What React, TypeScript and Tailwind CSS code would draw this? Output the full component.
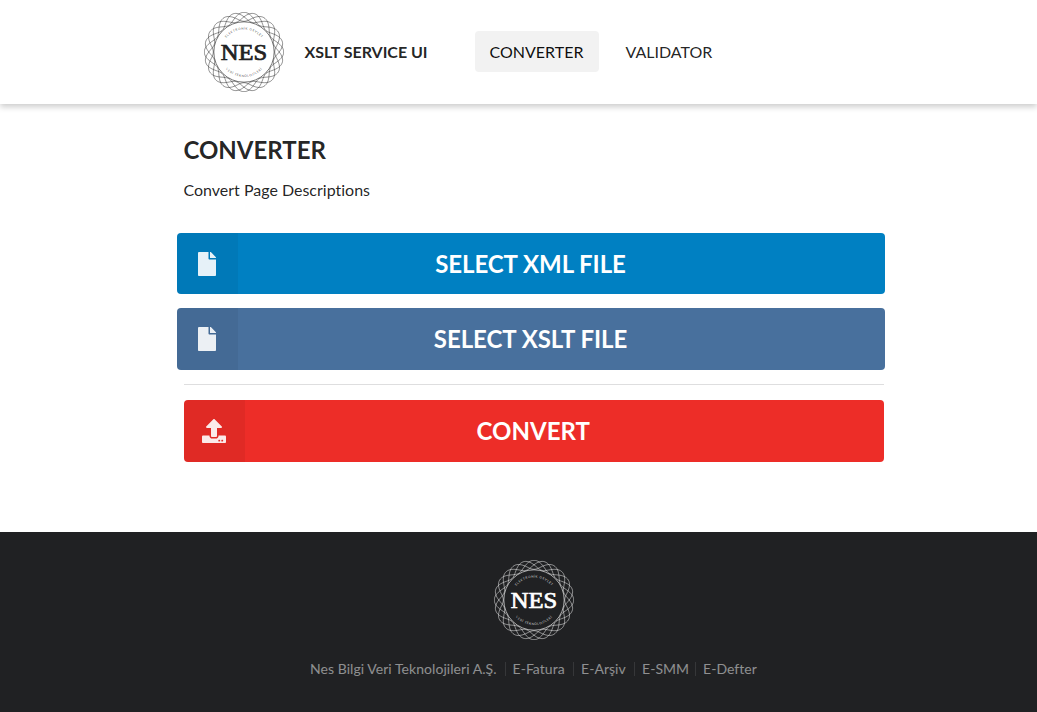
import { FaFile, FaUpload } from "react-icons/fa";

function wave(phase: number) {
  const points = Array.from({ length: 181 }, (_, i) => {
    const a = (i * 2 * Math.PI) / 180;
    const r = 35.2 + 4.5 * Math.cos(6 * a + phase);
    return `${(r * Math.cos(a)).toFixed(2)} ${(r * Math.sin(a)).toFixed(2)}`;
  });
  return `M${points.join("L")}Z`;
}

const waves = [0, 1, 2, 3].map((i) => wave((i * Math.PI) / 2));

function Logo({ id, ink }: { id: string; ink: string }) {
  return (
    <svg width="80" height="80" viewBox="-40 -40 80 80" className="block shrink-0" fill="none">
      <g stroke={ink} strokeWidth="0.55" strokeOpacity="0.9">
        {waves.map((d) => (
          <path key={d} d={d} />
        ))}
      </g>
      <circle r="30.2" stroke={ink} strokeWidth="0.7" strokeOpacity="0.9" />
      <path id={`${id}-top`} d="M-22.5 0A22.5 22.5 0 0 1 22.5 0" />
      <path id={`${id}-bottom`} d="M-25 0A25 25 0 0 0 25 0" />
      <g fill={ink} fillOpacity="0.8" fontSize="3.2" textAnchor="middle" fontFamily="Lato, sans-serif">
        <text letterSpacing="0.5">
          <textPath href={`#${id}-top`} startOffset="50%">ELEKTRONİK DEVLET</textPath>
        </text>
        <text letterSpacing="0.55">
          <textPath href={`#${id}-bottom`} startOffset="50%">VERİ TEKNOLOJİLERİ</textPath>
        </text>
      </g>
      <text y="7.6" fill={ink} stroke={ink} strokeWidth="0.7" fontSize="22.3" textAnchor="middle" textLength="46.5" lengthAdjust="spacingAndGlyphs" fontFamily="'Liberation Serif', serif">NES</text>
    </svg>
  );
}

const links = [
  { label: "Nes Bilgi Veri Teknolojileri A.Ş.", width: "w-[187.5px]" },
  { label: "E-Fatura", width: "w-[53.5px]" },
  { label: "E-Arşiv", width: "w-[46px]" },
  { label: "E-SMM", width: "w-[46px]" },
  { label: "E-Defter", width: "w-[55px]" },
];

export default function App() {
  return (
    <div className="flex h-[712px] flex-col bg-white font-[Lato,sans-serif] text-base text-black/87 [font-variant-ligatures:none]">
      <header className="h-[104px] shrink-0 shadow-[0_3px_6px_rgba(0,0,0,0.2)]">
        <nav className="flex h-full items-center pl-[204px]">
          <Logo id="header" ink="#222222" />
          <span className="ml-[20.5px] w-[170.5px] font-bold leading-6 tracking-[-0.03px]">XSLT SERVICE UI</span>
          <a className="mb-[2px] flex h-[41px] w-[124px] items-center justify-center rounded-[4px] bg-[#f2f2f2] pt-px pr-px text-black/95">CONVERTER</a>
          <a className="ml-[26.5px]">VALIDATOR</a>
        </nav>
      </header>
      <main className="ml-[184px] w-[700px] grow pt-[30px]">
        <h1 className="-ml-[0.6px] text-2xl font-bold leading-[31px]">CONVERTER</h1>
        <p className="-ml-[0.6px] mt-[13px] leading-6">Convert Page Descriptions</p>
        <div className="-mx-[7px] mt-[31px] flex w-[708px] flex-col gap-[14px] text-2xl font-bold text-white">
          <button className="flex h-[61px] overflow-hidden rounded-[4px] bg-[#0080c2]">
            <span className="flex h-full w-[61px] items-center justify-center bg-black/5 pr-[1.4px]"><FaFile className="opacity-90" /></span>
            <span className="flex h-full grow items-center justify-center pr-[62px] tracking-[-0.06px]">SELECT XML FILE</span>
          </button>
          <button className="flex h-[62px] overflow-hidden rounded-[4px] bg-[#48709d]">
            <span className="flex h-full w-[61px] items-center justify-center bg-black/5 pr-[1.4px]"><FaFile className="opacity-90" /></span>
            <span className="flex h-full grow items-center justify-center pr-[62px] tracking-[-0.06px]">SELECT XSLT FILE</span>
          </button>
        </div>
        <div className="mt-[14px] h-px bg-[#dededf]" />
        <button className="mt-[15px] flex h-[62px] w-full overflow-hidden rounded-[4px] bg-[#ed2d28] text-2xl font-bold text-white">
          <span className="flex h-full w-[61px] items-center justify-center bg-black/5 pr-[1.4px]"><FaUpload className="opacity-90" /></span>
          <span className="flex h-full grow items-center justify-center pr-[62.6px]">CONVERT</span>
        </button>
      </main>
      <footer className="flex h-[180px] shrink-0 flex-col items-center bg-[#202123] pt-7 pl-[31px]">
        <Logo id="footer" ink="#ffffff" />
        <div className="mt-[19px] flex text-sm leading-5 text-white/50">
          {links.map(({ label, width }, i) => (
            <div key={label} className="flex items-center">
              {i > 0 && <span className="mx-[7px] h-[14px] w-px bg-white/10" />}
              <a className={`${width} whitespace-nowrap tracking-[0.05px]`}>{label}</a>
            </div>
          ))}
        </div>
      </footer>
    </div>
  );
}
